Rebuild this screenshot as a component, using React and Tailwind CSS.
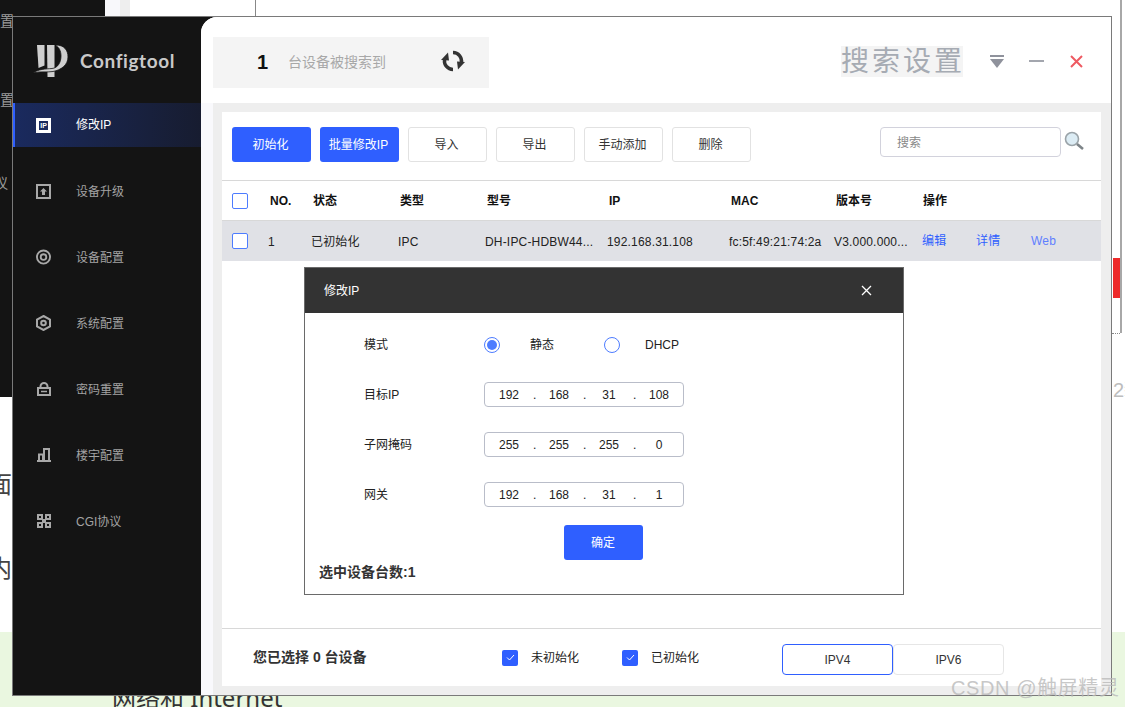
const FONT = "font-['Liberation_Sans','Noto_Sans_CJK_SC',sans-serif]";

function Logo() {
  return (
    <svg width="36" height="34" viewBox="0 0 36 34" fill="#cfcfcf" className="shrink-0">
      <path d="M4 1h7.500v20.500L5.500 24z" />
      <path d="M14 1h7.500v32H14.500z" />
      <path d="M23 1C31 1 35 6 35 13 35 21 28 26 20 27.500 14 28.500 6 27 0 29 5 25 13 25 19 24.500 25 24 28 18 28 12 28 7 26 3 23 2z" stroke="#141414" strokeWidth="0.800" />
    </svg>
  );
}

const stroke = { fill: "none", stroke: "#a8a8a8", strokeWidth: 2 };
const icons = {
  up: (
    <svg width="15" height="15" viewBox="0 0 15 15">
      <rect x="1" y="1" width="13" height="13" {...stroke} />
      <path d="M7.5 4 11 7.5H9V11H6V7.5H4z" fill="#a8a8a8" />
    </svg>
  ),
  target: (
    <svg width="16" height="16" viewBox="0 0 16 16">
      <circle cx="8" cy="8" r="7" {...stroke} />
      <circle cx="8" cy="8" r="3" {...stroke} />
    </svg>
  ),
  hex: (
    <svg width="15" height="16" viewBox="0 0 15 16">
      <path d="M7.5 1 14 4.5v7L7.5 15 1 11.500v-7z" {...stroke} />
      <circle cx="7.500" cy="8" r="2.300" {...stroke} />
    </svg>
  ),
  lock: (
    <svg width="14" height="14" viewBox="0 0 14 14">
      <rect x="1" y="6" width="12" height="7" {...stroke} />
      <path d="M3.500 6V4.500a3.500 3.500 0 0 1 7 0V6" {...stroke} />
      <path d="M4 9.500h6" {...stroke} strokeWidth="1.500" />
    </svg>
  ),
  bars: (
    <svg width="14" height="14" viewBox="0 0 14 14">
      <path d="M0 13h14" {...stroke} />
      <path d="M2 13V6.500h4V13" {...stroke} />
      <path d="M7 13V1h5v12" {...stroke} />
    </svg>
  ),
  grid: (
    <svg width="14" height="14" viewBox="0 0 14 14" fill="#a8a8a8">
      <path d="M0 0h6v6H0zM8 0h6v6H8zM0 8h6v6H0zM8 8h6v6H8z" />
      <path d="M2 2h2v2H2zM10 2h2v2h-2zM2 10h2v2H2zM10 10h2v2h-2z" fill="#141414" />
      <path d="M5 5h4v4H5z" />
    </svg>
  ),
};

function NavItem({ icon, label }) {
  return (
    <div className="mb-[22px] flex h-[44px] items-center pl-[23px] text-[12px] text-[#a3a3a3]">
      <span className="flex w-[15px] justify-center">{icon}</span>
      <span className="ml-[25px] mt-[2px]">{label}</span>
    </div>
  );
}

function Sidebar() {
  return (
    <aside className="flex w-[188px] shrink-0 flex-col bg-[#141414]">
      <div className="flex h-[86px] items-center pl-[20px] pt-[2px]">
        <Logo />
        <span className={`ml-[11px] text-[19px] font-bold tracking-[0.6px] text-[#c9c9c9] font-['Lato','Noto_Sans',sans-serif]`}>Configtool</span>
      </div>
      <div className="mb-[22px] flex h-[44px] items-center border-l-2 border-[#2f5fff] bg-gradient-to-r from-[#1a2a5e] to-[#171c30] pl-[21px] text-[12px] text-white">
        <span className="flex h-[15px] w-[15px] items-center justify-center border-[3px] border-white bg-[#1a2a5e] text-[7px] font-bold leading-none text-white">IP</span>
        <span className="ml-[25px]">修改IP</span>
      </div>
      <NavItem icon={icons.up} label="设备升级" />
      <NavItem icon={icons.target} label="设备配置" />
      <NavItem icon={icons.hex} label="系统配置" />
      <NavItem icon={icons.lock} label="密码重置" />
      <NavItem icon={icons.bars} label="楼宇配置" />
      <NavItem icon={icons.grid} label="CGI协议" />
    </aside>
  );
}

function TopBar() {
  return (
    <header className="flex h-[86px] shrink-0 items-center rounded-tl-[16px] bg-white pl-[12px] pr-[28px] pt-[2px]">
      <div className="mt-[2px] flex h-[51px] w-[276px] items-center bg-[#f4f4f4] pl-[44px]">
        <span className="w-[31px] text-[20px] font-bold text-[#111]">1</span>
        <span className="text-[14px] text-[#a8a8a8]">台设备被搜索到</span>
        <svg className="-mt-[2px] ml-[55px]" width="24" height="24" viewBox="0 0 24 24" fill="none" stroke="#333" strokeWidth="3.400">
          <path d="M12 3.500A8.500 8.500 0 0 1 20.400 13.500" />
          <path d="M24 13 16 12.500 17 20.500z" fill="#333" stroke="none" />
          <path d="M12 20.500A8.500 8.500 0 0 1 3.600 10.500" />
          <path d="M0 11 8 11.500 7 3.500z" fill="#333" stroke="none" />
        </svg>
      </div>
      <span className="ml-auto w-[122px] overflow-hidden whitespace-nowrap bg-[#f4f4f4] text-[28px] leading-[31px] tracking-[3px] text-[#a6abb3]">搜索设置</span>
      <svg className="ml-[27px]" width="14" height="13" viewBox="0 0 14 13" fill="#8f929c">
        <path d="M0 0h14v2H0z" />
        <path d="M0 4h14l-7 9z" />
      </svg>
      <svg className="ml-[25px]" width="15" height="2" viewBox="0 0 15 2"><path d="M0 0h15v2H0z" fill="#a3a6ae" /></svg>
      <svg className="ml-[26px]" width="13" height="13" viewBox="0 0 13 13" stroke="#ee5a62" strokeWidth="2"><path d="M1 1l11 11M12 1 1 12" /></svg>
    </header>
  );
}

function Btn({ children, primary }) {
  return (
    <button className={`h-[35px] w-[79px] rounded-[3px] pr-[2px] pt-[1px] text-[12px] ${primary ? "bg-[#2f5fff] text-white" : "border border-[#e2e2e2] bg-white text-[#333]"}`}>
      {children}
    </button>
  );
}

function Toolbar() {
  return (
    <div className="flex h-[68px] shrink-0 items-start pl-[10px] pr-[16px] pt-[15px]">
      <div className="flex gap-[9px]">
        <Btn primary>初始化</Btn>
        <Btn primary>批量修改IP</Btn>
        <Btn>导入</Btn>
        <Btn>导出</Btn>
        <Btn>手动添加</Btn>
        <Btn>删除</Btn>
      </div>
      <div className="ml-auto flex items-start">
        <div className="flex h-[30px] w-[181px] items-center rounded-[4px] border border-[#d2d2dc] bg-white pl-[16px] pt-[2px] text-[12px] text-[#888]">搜索</div>
        <svg className="ml-[3px] mt-[4px]" width="21" height="20" viewBox="0 0 21 20" fill="none">
          <circle cx="8" cy="8" r="6.500" fill="#dcecf4" stroke="#9aa3a8" strokeWidth="1.600" />
          <path d="M13 13l6 5" stroke="#7d8488" strokeWidth="2.600" />
        </svg>
      </div>
    </div>
  );
}

const CB = () => <span className="block h-[16px] w-[16px] rounded-[2px] border border-[#4d7cff] bg-white" />;
const widths = ["w-[43px]", "w-[87px]", "w-[87px]", "w-[122px]", "w-[122px]", "w-[105px]", "w-[87px]"];
const heads = ["NO.", "状态", "类型", "型号", "IP", "MAC", "版本号"];
const cells = ["1", "已初始化", "IPC", "DH-IPC-HDBW44...", "192.168.31.108", "fc:5f:49:21:74:2a", "V3.000.000..."];

function Table() {
  return (
    <div className="shrink-0">
      <div className="flex h-[41px] items-center border-y border-[#d8d8d8] pl-[10px] text-[12px] font-bold text-[#111]">
        <CB />
        <div className="flex pl-[22px]">
          {heads.map((h, i) => <span key={h} className={`${widths[i]} shrink-0`}>{h}</span>)}
          <span>操作</span>
        </div>
      </div>
      <div className="flex h-[40px] items-center bg-[#e0e1e6] pl-[10px] text-[12px] text-[#222]">
        <CB />
        <div className="flex pl-[20px] pt-[1px] tracking-[0.18px]">
          {cells.map((c, i) => <span key={c} className={`${widths[i]} shrink-0 whitespace-nowrap`}>{c}</span>)}
          <span className="-mt-[1px] ml-[1px] w-[54px] text-[#2f5fff]">编辑</span>
          <span className="-mt-[1px] w-[55px] text-[#2f5fff]">详情</span>
          <span className="-mt-[1px] text-[#5f7fff]">Web</span>
        </div>
      </div>
    </div>
  );
}

function IpInput({ parts }) {
  return (
    <div className="flex h-[25px] w-[200px] items-center rounded-[4px] border border-[#b9bdc9] text-[12px] text-[#222]">
      {parts.map((p, i) => (
        <div key={i} className="flex w-[50px] items-center">
          <span className="w-[48px] text-center">{p}</span>
          {i < 3 && <span className="w-[2px] text-center">.</span>}
        </div>
      ))}
    </div>
  );
}

function Field({ label, parts }) {
  return (
    <div className="mb-[25px] flex h-[25px] items-center pl-[59px] text-[12px] text-[#222]">
      <span className="w-[120px]">{label}</span>
      <IpInput parts={parts} />
    </div>
  );
}

function Dialog() {
  return (
    <div className="absolute left-[82px] top-[155px] h-[328px] w-[600px] border border-[#6a6a6a] bg-white">
      <div className="flex h-[45px] items-center justify-between bg-[#333] pl-[19px] pr-[31px] text-[12px] text-white">
        <span>修改IP</span>
        <svg width="11" height="11" viewBox="0 0 11 11" stroke="#fff" strokeWidth="1.300"><path d="M1 1l9 9M10 1 1 10" /></svg>
      </div>
      <div className="mb-[29px] mt-[24px] flex h-[16px] items-center pl-[59px] text-[12px] text-[#222]">
        <span className="w-[120px]">模式</span>
        <span className="flex h-[16px] w-[16px] items-center justify-center rounded-full border border-[#4d7cff]">
          <span className="h-[10px] w-[10px] rounded-full bg-[#4d7cff]" />
        </span>
        <span className="ml-[30px] w-[74px]">静态</span>
        <span className="h-[16px] w-[16px] rounded-full border border-[#4d7cff]" />
        <span className="ml-[25px]">DHCP</span>
      </div>
      <Field label="目标IP" parts={["192", "168", "31", "108"]} />
      <Field label="子网掩码" parts={["255", "255", "255", "0"]} />
      <Field label="网关" parts={["192", "168", "31", "1"]} />
      <div className="-mt-[7px] flex justify-center pr-[2px]">
        <button className="h-[35px] w-[79px] rounded-[3px] bg-[#2f5fff] text-[12px] text-white">确定</button>
      </div>
      <div className="mt-[2px] pl-[14px] text-[14px] font-bold leading-[20px] text-[#333]">选中设备台数:1</div>
    </div>
  );
}

function Check({ label }) {
  return (
    <div className="flex items-center text-[12px] text-[#222]">
      <span className="flex h-[16px] w-[16px] items-center justify-center rounded-[2px] bg-[#2f5fff]">
        <svg width="9" height="7" viewBox="0 0 9 7" fill="none" stroke="#fff" strokeWidth="1"><path d="M1 3.500 3.500 6 8 1" /></svg>
      </span>
      <span className="ml-[13px]">{label}</span>
    </div>
  );
}

function Footer() {
  return (
    <div className="mt-auto flex h-[58px] shrink-0 items-center border-t border-[#d8d8d8] pl-[31px]">
      <span className="w-[249px] text-[14px] font-bold text-[#333]">您已选择 0 台设备</span>
      <Check label="未初始化" />
      <div className="ml-[43px]"><Check label="已初始化" /></div>
      <div className="ml-[83px] mt-[4px] flex text-[12px] text-[#333]">
        <span className="flex h-[31px] w-[111px] items-center justify-center rounded-[4px] border border-[#2f5fff]">IPV4</span>
        <span className="flex h-[31px] w-[111px] items-center justify-center rounded-[4px] border border-[#e6e6e6]">IPV6</span>
      </div>
    </div>
  );
}

function Main() {
  return (
    <main className="flex min-w-0 flex-1 flex-col rounded-tl-[16px] bg-[#f9f9fc]">
      <TopBar />
      <div className="ml-[12px] flex min-h-0 flex-1 bg-[#eeeeee] pb-[9px] pl-[9px] pr-[10px] pt-[9px]">
        <div className="relative flex min-w-0 flex-1 flex-col bg-white">
          <Toolbar />
          <Table />
          <Dialog />
          <Footer />
        </div>
      </div>
    </main>
  );
}

function Backdrop() {
  return (
    <>
      <div className="absolute left-0 top-0 h-[397px] w-[105px] bg-[#141414] text-[14px] text-[#9a9a9a]">
        <span className="absolute left-0 top-[11px]">置</span>
        <span className="absolute left-0 top-[90px]">置</span>
        <span className="absolute -left-[6px] top-[173px]">议</span>
      </div>
      <div className="absolute left-[105px] top-0 h-[17px] w-[15px] bg-[#f8f8fb]" />
      <div className="absolute left-[120px] top-0 h-[17px] w-[10px] bg-[#eeeeee]" />
      <div className="absolute left-[255px] top-0 h-[17px] w-px bg-[#888]" />
      <div className="absolute bottom-0 left-0 right-0 h-[75px] bg-[#eaf7e0]" />
      <span className="absolute -left-[12px] top-[470px] text-[24px] leading-[30px] text-[#444]">面</span>
      <span className="absolute -left-[12px] top-[554px] text-[24px] leading-[30px] text-[#444]">内</span>
      <span className="absolute left-[112px] top-[683px] whitespace-nowrap text-[24px] leading-[30px] text-[#333] font-['Noto_Sans','Noto_Sans_CJK_SC',sans-serif]">网络和 Internet</span>
      <div className="absolute left-[1120px] top-0 h-[333px] w-[2px] bg-[#a8a8a8]" />
      <div className="absolute left-[1112px] top-[333px] w-[8px] border-t border-dotted border-[#888]" />
      <div className="absolute left-[1113px] top-[258px] h-[40px] w-[7px] bg-[#ee2a2a]" />
      <span className="absolute left-[1113px] top-[378px] whitespace-nowrap text-[20px] leading-[24px] text-[#bdbdbd]">2新</span>
    </>
  );
}

export default function App() {
  return (
    <div className={`relative h-[707px] w-[1125px] overflow-hidden bg-white ${FONT}`}>
      <Backdrop />
      <div className="absolute left-[12px] top-[16px] flex h-[680px] w-[1100px] border border-[#7a7a7a] bg-[#141414]">
        <Sidebar />
        <Main />
      </div>
      <span className="absolute left-[951px] top-[675px] whitespace-nowrap text-[20px] leading-[26px] tracking-[0.6px] text-[#b9b9b9]/80">CSDN @触屏精灵</span>
    </div>
  );
}
